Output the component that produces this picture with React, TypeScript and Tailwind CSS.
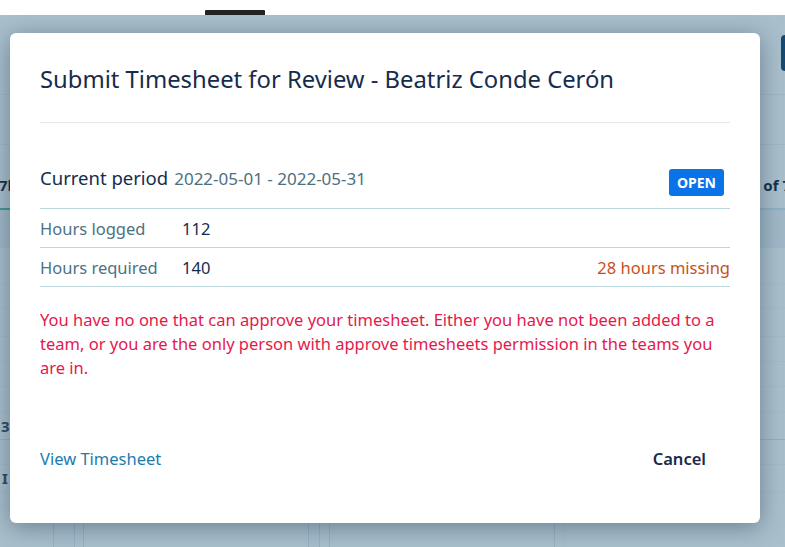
import React from 'react';

const FONT = { fontFamily: '"Noto Sans", "Open Sans", Arial, sans-serif' };

function BackdropRows() {
  // dimmed app content visible around the dialog
  return (
    <div className="flex flex-col w-full">
      <div className="h-[80px] border-b border-[#9fb7c5]" />
      <div className="h-[50px] border-b border-[#9fb7c5]" />
      <div className="h-[65px] flex">
        <div className="w-[12px] border-b-2 border-[#3f9a86] pt-[28px] whitespace-nowrap">
          <span className="text-[15px] font-bold text-[#12304d] -ml-[1px]">7h</span>
        </div>
        <div className="flex-1 border-b-2 border-[#8fb0c4] pt-[28px] text-right">
          <span className="text-[15px] font-bold text-[#12304d] mr-[-6px]">of 7</span>
        </div>
      </div>
      <div className="h-[38px] bg-[#a0b8c7] border-b border-[#9fb7c5]" />
      <div className="h-[37px] border-b border-[#a3bbc9]" />
      <div className="h-[23px] border-b border-[#a3bbc9]" />
      <div className="h-[29px] border-b border-[#a3bbc9]" />
      <div className="h-[25px] border-b border-[#a3bbc9]" />
      <div className="h-[25px] border-b border-[#a3bbc9]" />
      <div className="h-[26px] border-b border-[#a3bbc9]" />
      <div className="h-[27px] flex items-center border-b border-[#8fb0c4]">
        <span className="text-[15px] font-bold text-[#2c4b66] ml-[1px]">3</span>
      </div>
      <div className="h-[25px] border-b border-[#a3bbc9]" />
      <div className="h-[28px] flex items-center border-b border-[#a3bbc9]">
        <span className="text-[15px] font-bold text-[#2c4b66] ml-[2px]">I</span>
      </div>
      <div className="flex h-[60px]">
        <div className="w-[53px]" />
        <div className="w-[21px] border-l border-[#95b2c4] bg-[#a6bfcd]" />
        <div className="w-[9px] border-l border-[#95b2c4]" />
        <div className="w-[225px] border-l border-[#95b2c4]" />
        <div className="w-[11px] border-l border-[#95b2c4] bg-[#a6bfcd]" />
        <div className="w-[10px] border-l border-[#95b2c4]" />
        <div className="w-[225px] border-l border-[#95b2c4]" />
        <div className="w-[10px] border-l border-[#95b2c4]" />
        <div className="flex-1 border-l border-[#a3bbc9]" />
      </div>
    </div>
  );
}

export default function App() {
  return (
    <div className="w-[785px] h-[547px] overflow-hidden bg-white flex flex-col relative" style={FONT}>
      <div className="h-[15px] bg-white flex items-end pl-[205px]">
        <div className="w-[60px] h-[5px] bg-[#222222] rounded-t-[1px]" />
      </div>
      <div className="flex-1 bg-[#a9bfcc] relative overflow-hidden">
        <BackdropRows />
        <div className="absolute right-[-10px] top-[20px] w-[14px] h-[36px] rounded-[4px] bg-[#174a73]" />

        {/* dialog */}
        <div className="absolute left-[10px] top-[18px] w-[750px] h-[490px] bg-white rounded-[6px] shadow-[0_4px_24px_rgba(30,50,70,0.45)] px-[30px] flex flex-col">
          <div className="h-[90px] pt-[30px] border-b border-[#e2e8ec]">
            <h2 className="text-[23.8px] leading-[32px] text-[#172b4d]">
              Submit Timesheet for Review - Beatriz Conde Cerón
            </h2>
          </div>

          <div className="h-[86px] pt-[37px] flex items-start justify-between border-b border-[#bcd6dd]">
            <div className="flex items-baseline gap-[6px] mt-[4px]">
              <span className="text-[18.5px] text-[#172b4d]">Current period</span>
              <span className="text-[17px] text-[#4b7080]">2022-05-01 - 2022-05-31</span>
            </div>
            <span className="mt-[9px] mr-[6px] w-[55px] h-[27px] rounded-[3px] bg-[#0a73e8] text-white text-[14px] font-bold flex items-center justify-center">
              OPEN
            </span>
          </div>

          <div className="h-[39px] pt-[3px] flex items-center border-b border-[#bcd6dd] text-[16.5px]">
            <span className="w-[142px] text-[#4b7283]">Hours logged</span>
            <span className="text-[#172b4d]">112</span>
          </div>
          <div className="h-[39px] pt-[3px] flex items-center border-b border-[#bcd6dd] text-[16.5px]">
            <span className="w-[142px] text-[#4b7283]">Hours required</span>
            <span className="flex-1 text-[#172b4d]">140</span>
            <span className="text-[#c8501d]">28 hours missing</span>
          </div>

          <p className="mt-[21px] text-[16.5px] leading-[24px] text-[#e6184b]">
            You have no one that can approve your timesheet. Either you have not been added to a team, or you are the only person with approve timesheets permission in the teams you are in.
          </p>

          <div className="mt-auto mb-[45px] flex items-center justify-between">
            <a className="text-[16.5px] text-[#1b7bb0] cursor-pointer">View Timesheet</a>
            <button className="px-[24px] py-[6px] text-[16.5px] font-semibold text-[#172b4d]">Cancel</button>
          </div>
        </div>
      </div>
    </div>
  );
}
